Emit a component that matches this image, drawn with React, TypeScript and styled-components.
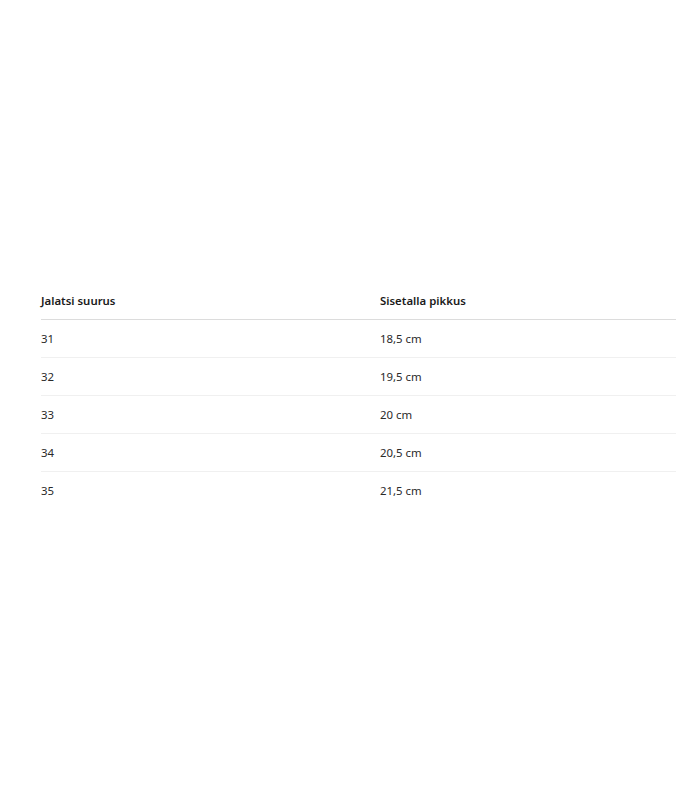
import React from "react";
import styled, { createGlobalStyle } from "styled-components";

const Global = createGlobalStyle`
  html, body { margin: 0; padding: 0; background: #fff; }
  body { font-family: "Noto Sans", "Open Sans", sans-serif; color: #222; }
`;

const Page = styled.div`
  padding: 282px 24px 0 41px;
`;

const Table = styled.div`
  width: 635px;
  display: grid;
  grid-template-columns: 339px 1fr;
`;

const Row = styled.div<{ $head?: boolean; $last?: boolean }>`
  display: contents;
  & > div {
    height: 38px;
    display: flex;
    align-items: center;
    font-size: 11.4px;
    font-weight: ${(p) => (p.$head ? 600 : 400)};
    color: ${(p) => (p.$head ? "#1a1a1a" : "#2a2a2a")};
    border-bottom: 1px solid
      ${(p) => (p.$last ? "transparent" : p.$head ? "#dcdcdc" : "#f0f0f0")};
    box-sizing: border-box;
  }
`;

const Cell = styled.div``;

const rows: [string, string][] = [
  ["31", "18,5 cm"],
  ["32", "19,5 cm"],
  ["33", "20 cm"],
  ["34", "20,5 cm"],
  ["35", "21,5 cm"],
];

export default function App() {
  return (
    <>
      <Global />
      <Page>
        <Table>
          <Row $head>
            <Cell>Jalatsi suurus</Cell>
            <Cell>Sisetalla pikkus</Cell>
          </Row>
          {rows.map(([a, b], i) => (
            <Row key={a} $last={i === rows.length - 1}>
              <Cell>{a}</Cell>
              <Cell>{b}</Cell>
            </Row>
          ))}
        </Table>
      </Page>
    </>
  );
}
